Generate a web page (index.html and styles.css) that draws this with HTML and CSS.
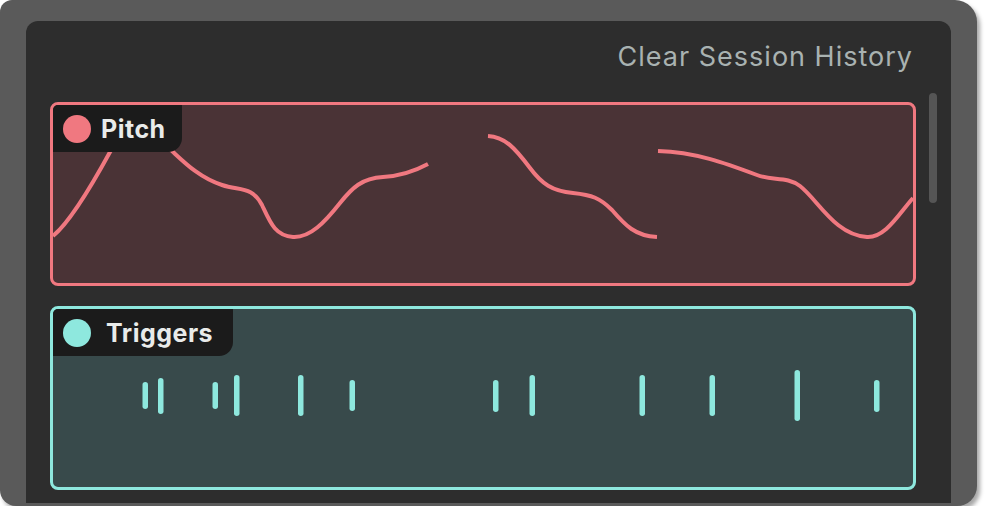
FILE: index.html
```html
<!DOCTYPE html>
<html lang="en">
<head>
    <meta charset="UTF-8">
    <meta name="viewport" content="width=device-width, initial-scale=1.0">
    <title>Session History</title>
    <link rel="stylesheet" href="styles.css">
</head>

<body>
    <div class="window">
        <div class="panel">
            <div class="panel-header">
                <button class="clear-btn" type="button">Clear Session History</button>
            </div>
            <div class="tracks">
                <div class="track track-pitch">
                    <div class="track-tab">
                        <span class="track-dot"></span>
                        <span class="track-name">Pitch</span>
                    </div>
                    <svg class="track-plot" viewBox="53 105 860 178" width="860" height="178">
                        <g fill="none" stroke="#f07880" stroke-width="4">
                            <path d="M53,236 C70,222 92,185 110,152 C122,132 132,124 142,125 C152,126 162,140 172,151 C185,163 200,178 222,185 C240,191 252,186 262,205 C270,222 275,236 293,237 C310,238 325,222 340,203 C352,188 362,178 383,177 C400,176 415,171 428,164"/>
                            <path d="M488,136 C505,137 515,148 530,168 C542,184 552,191 573,193 C592,195 600,198 612,210 C625,225 635,236 657,237"/>
                            <path d="M658,151 C695,152 725,163 757,175 C772,181 787,176 800,186 C818,200 835,235 867,237 C885,238 898,215 913,198"/>
                        </g>
                    </svg>
                </div>
                <div class="track track-triggers">
                    <div class="track-tab">
                        <span class="track-dot"></span>
                        <span class="track-name">Triggers</span>
                    </div>
                    <svg class="track-plot" viewBox="53 309 860 178" width="860" height="178">
                        <g fill="#8ee8de">
                            <rect x="142.5" y="382" width="5.5" height="27" rx="2.75"/>
                            <rect x="158" y="378" width="5.5" height="36" rx="2.75"/>
                            <rect x="212.5" y="382" width="5.5" height="27" rx="2.75"/>
                            <rect x="234" y="375" width="5.5" height="41" rx="2.75"/>
                            <rect x="298" y="375" width="5.5" height="41" rx="2.75"/>
                            <rect x="349.5" y="380" width="5.5" height="31" rx="2.75"/>
                            <rect x="493" y="380" width="5.5" height="32" rx="2.75"/>
                            <rect x="529.5" y="375" width="5.5" height="41" rx="2.75"/>
                            <rect x="639.5" y="375" width="5.5" height="41" rx="2.75"/>
                            <rect x="709.5" y="375" width="5.5" height="41" rx="2.75"/>
                            <rect x="794.5" y="370" width="5.5" height="51" rx="2.75"/>
                            <rect x="874" y="380" width="5.5" height="32" rx="2.75"/>
                        </g>
                    </svg>
                </div>
            </div>
            <div class="scroll-thumb"></div>
        </div>
    </div>
</body>
</html>
```

FILE: styles.css
```css
body {
    margin: 0;
    padding: 0;
    background: #ffffff;
    font-family: Inter, "Noto Sans", sans-serif;
}

.window {
    width: 977px;
    height: 506px;
    box-sizing: border-box;
    padding: 21px 26px 3px 26px;
    background-color: #5a5a5a;
    border-radius: 12px 22px 20px 16px;
    box-shadow: 3px 4px 4px rgba(0, 0, 0, 0.35);
}

.panel {
    position: relative;
    height: 100%;
    box-sizing: border-box;
    padding: 20px 35px 0 24px;
    background-color: #2d2d2d;
    border-radius: 12px 12px 0 0;
    overflow: hidden;
}

.panel-header {
    display: flex;
    justify-content: flex-end;
    padding-right: 3px;
    margin-bottom: 29px;
}

.clear-btn {
    padding: 0;
    border: none;
    background: none;
    font-family: Inter, "Noto Sans", sans-serif;
    font-size: 27px;
    line-height: 32px;
    font-weight: 400;
    letter-spacing: 1px;
    color: #a9b2b1;
    cursor: pointer;
}

.tracks {
    display: flex;
    flex-direction: column;
    gap: 20px;
}

.track {
    position: relative;
    border: 3px solid;
    border-radius: 8px;
    overflow: hidden;
}

.track-pitch {
    border-color: #f07880;
    background-color: #4a3336;
}

.track-triggers {
    border-color: #8ee8de;
    background-color: #384a4b;
}

.track-plot {
    display: block;
}

.track-tab {
    position: absolute;
    top: 0;
    left: 0;
    height: 47px;
    display: flex;
    align-items: center;
    gap: 10px;
    padding: 0 16px 0 10px;
    background-color: #1b1b1b;
    border-bottom-right-radius: 14px;
}

.track-dot {
    width: 28px;
    height: 28px;
    border-radius: 50%;
}

.track-pitch .track-dot {
    background-color: #f07880;
}

.track-triggers .track-dot {
    background-color: #8ee8de;
}

.track-name {
    font-size: 25px;
    font-weight: 700;
    letter-spacing: 0.5px;
    color: #e9ebea;
}

.track-triggers .track-name {
    margin-left: 5px;
    margin-right: 4px;
}

.scroll-thumb {
    position: absolute;
    top: 72px;
    right: 14px;
    width: 8px;
    height: 110px;
    border-radius: 4px;
    background-color: #555555;
}
```
